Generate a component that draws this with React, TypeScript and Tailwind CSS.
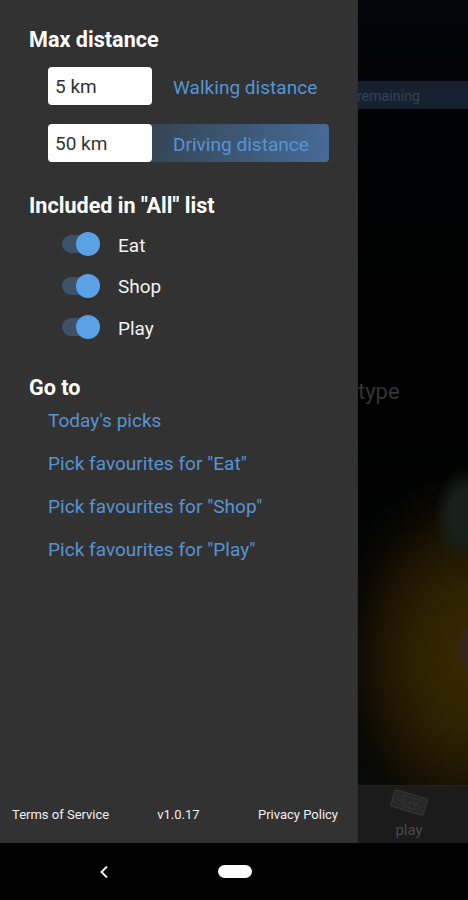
import React, { useState } from 'react';
import clsx from 'clsx';

interface DistanceOption {
  id: string;
  value: string;
  label: string;
}

const distances: DistanceOption[] = [
  { id: 'walking', value: '5 km', label: 'Walking distance' },
  { id: 'driving', value: '50 km', label: 'Driving distance' },
];

const categories = ['Eat', 'Shop', 'Play'];

const links = [
  "Today's picks",
  'Pick favourites for "Eat"',
  'Pick favourites for "Shop"',
  'Pick favourites for "Play"',
];

function Toggle({ label, on, onChange }: { label: string; on: boolean; onChange: () => void }) {
  return (
    <button onClick={onChange} className="flex h-[41.5px] items-center">
      <span
        className={clsx(
          'flex h-[18px] w-[38px] items-center rounded-full',
          on ? 'justify-end bg-[#3d5168]' : 'justify-start bg-[#555]'
        )}
      >
        <span className={clsx('size-6 shrink-0 rounded-full', on ? 'bg-[#5aa2e5]' : 'bg-[#bbb]')} />
      </span>
      <span className="ml-[18px] pt-[3px] text-[19px] leading-6 text-[#f1f1f1]">{label}</span>
    </button>
  );
}

function TicketIcon() {
  return (
    <svg width="40" height="30" viewBox="0 0 40 30" fill="none" stroke="#333">
      <g transform="rotate(17 20 15)">
        <path
          d="M4.5 6h31a2 2 0 0 1 1.5 2v2.5q-1.6.5 0 1.5v2q-1.6.5 0 1.5v2q-1.6.5 0 1.5V21a2 2 0 0 1-1.5 2h-31A2 2 0 0 1 3 21v-2q1.6-.5 0-1.5v-2q1.6-.5 0-1.5v-2q1.6-.5 0-1.5V8a2 2 0 0 1 1.5-2z"
          fill="#272727"
          strokeWidth="1.4"
        />
        <path d="M7.5 8.5v12M32.5 8.5v12" strokeDasharray="2 1.2" />
        <path d="M10.5 9.5h19M10.5 19.5h19" />
        <path d="M12.5 11.5v6M15.5 11.5v6h2M21 17.5v-6M19 14.5h4M25 11.5v3h3v-3M26.5 14.5v3" strokeWidth="1.3" />
      </g>
    </svg>
  );
}

function Drawer() {
  const [selected, setSelected] = useState('driving');
  const [included, setIncluded] = useState<string[]>(categories);

  const toggle = (name: string) => {
    setIncluded((prev) => (prev.includes(name) ? prev.filter((n) => n !== name) : [...prev, name]));
  };

  return (
    <aside className="flex w-[358px] shrink-0 flex-col border-r border-[#2a2a2a] bg-[#323232] pt-[26px]">
      {/* Distance */}
      <section className="pl-[29px]">
        <h2 className="text-[21.6px] leading-7 font-bold text-white">Max distance</h2>
        <div className="mt-[13px] ml-[19px] flex flex-col gap-[19px]">
          {distances.map((d) => (
            <div
              key={d.id}
              onClick={() => setSelected(d.id)}
              className={clsx(
                'flex h-[38px] w-[281px] cursor-pointer items-center rounded',
                selected === d.id && 'bg-linear-100 from-[#344454] from-35% to-[#456c98]'
              )}
            >
              <input
                defaultValue={d.value}
                className="h-full w-[104px] rounded bg-white pt-px pl-[7px] text-[19px] text-[#333] outline-none"
              />
              <span className="ml-[21px] pt-[3px] text-[19px] leading-6 tracking-[0.03px] text-[#5794d5]">
                {d.label}
              </span>
            </div>
          ))}
        </div>
      </section>

      {/* Categories in the combined list */}
      <section className="mt-[30px] pl-[29px]">
        <h2 className="text-[21.6px] leading-7 font-bold text-white">Included in "All" list</h2>
        <div className="mt-[3.5px] ml-[33px] flex flex-col">
          {categories.map((name) => (
            <Toggle key={name} label={name} on={included.includes(name)} onChange={() => toggle(name)} />
          ))}
        </div>
      </section>

      {/* Links */}
      <section className="mt-[25.5px] pl-[29px]">
        <h2 className="text-[21.6px] leading-7 font-bold text-white">Go to</h2>
        <nav className="mt-[7px] ml-[19px] flex flex-col items-start">
          {links.map((link) => (
            <a key={link} href="#" className="mb-[19px] text-[19px] leading-6 tracking-[0.03px] text-[#5794d5]">
              {link}
            </a>
          ))}
        </nav>
      </section>

      <footer className="mt-auto mb-[18px] flex pr-[19px] pl-3 text-[13px] leading-5 text-[#eee]">
        <a href="#">Terms of Service</a>
        <span className="ml-12">v1.0.17</span>
        <a href="#" className="ml-auto">
          Privacy Policy
        </a>
      </footer>
    </aside>
  );
}

function DimmedPage() {
  return (
    <main className="flex min-w-0 flex-1 flex-col overflow-hidden bg-[radial-gradient(ellipse_32px_48px_at_108px_515px,#18201a_0%,#18201a_50%,transparent_100%),radial-gradient(ellipse_16px_28px_at_114px_649px,#30241c_0%,#30241c_60%,transparent_100%),radial-gradient(ellipse_140px_190px_at_112px_660px,#362900_0%,#2e2300_35%,#1c1403_65%,#0e0a0280_85%,transparent_100%),linear-gradient(#02060a,#010203_100px,#000_400px,#020403_540px,#080a08_785px)]">
      <div className="mt-[81px] flex h-7 items-center bg-[#15212f] text-[14px] text-[#35414e]">
        <span className="-ml-px pt-[3px] tracking-[0.1px]">remaining</span>
      </div>
      <p className="mt-[269px] text-[22px] leading-7 text-[#353535]">type</p>
      <div className="mt-auto flex h-[58px] flex-col items-center border-t border-[#222] bg-[#1b1b1b] pt-0.5 pr-2 text-[15px] text-[#4a4a4a]">
        <TicketIcon />
        <span className="mt-0.5 leading-5">play</span>
      </div>
    </main>
  );
}

export default function App() {
  return (
    <div className="flex h-[900px] w-[468px] flex-col overflow-hidden bg-black font-['Roboto',sans-serif]">
      <div className="flex h-[843px]">
        <Drawer />
        <DimmedPage />
      </div>

      {/* System navigation */}
      <div className="flex h-[57px] items-center pl-[99px]">
        <svg width="10" height="14" viewBox="0 0 10 14" fill="none" stroke="#eee" strokeWidth="2">
          <path d="M8 1.5 2.5 7 8 12.5" />
        </svg>
        <span className="ml-[109px] h-[13px] w-[34px] rounded-full bg-white" />
      </div>
    </div>
  );
}
